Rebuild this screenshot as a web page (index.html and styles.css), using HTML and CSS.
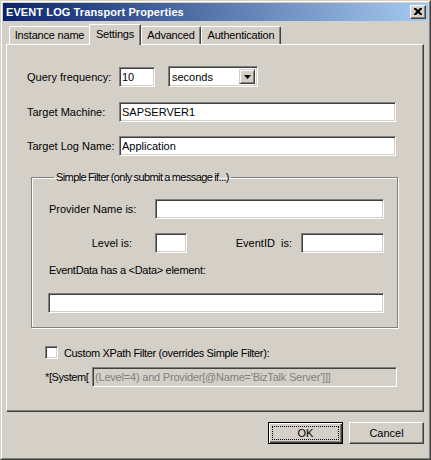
FILE: index.html
```html
<!DOCTYPE html>
<html>
<head>
<meta charset="utf-8">
<link rel="stylesheet" href="styles.css">
</head>
<body>
<div class="window">
  <div class="frame">
    <div class="titlebar">
      <span class="title">EVENT LOG Transport Properties</span>
      <span class="close">
        <svg width="8" height="7" viewBox="0 0 8 7"><path d="M0 0h2l2 2 2-2h2v1l-2.5 2.5L8 6v1H6L4 5 2 7H0V6l2.5-2.5L0 1z" fill="#000"/></svg>
      </span>
    </div>
    <div class="tabs">
      <div class="tab t-instance">Instance name</div>
      <div class="tab t-settings active">Settings</div>
      <div class="tab t-advanced">Advanced</div>
      <div class="tab t-auth">Authentication</div>
    </div>
    <div class="panel">
      <div class="row row-query">
        <span class="lbl lbl-main">Query frequency:</span>
        <input class="field f-query" value="10">
        <span class="combo">
          <span class="combo-text">seconds</span>
          <span class="combo-btn"><svg width="7" height="4" viewBox="0 0 7 4"><path d="M0 0h7L3.5 4z" fill="#000"/></svg></span>
        </span>
      </div>
      <div class="row row-machine">
        <span class="lbl lbl-main">Target Machine:</span>
        <input class="field f-wide" value="SAPSERVER1">
      </div>
      <div class="row row-log">
        <span class="lbl lbl-main">Target Log Name:</span>
        <input class="field f-wide" value="Application">
      </div>
      <fieldset class="group">
        <legend class="legend">Simple Filter (only submit a message if...)</legend>
        <div class="row row-provider">
          <span class="lbl lbl-filter">Provider Name is:</span>
          <input class="field f-provider" value="">
        </div>
        <div class="row row-level">
          <span class="lbl lbl-filter lbl-right">Level is:</span>
          <input class="field f-level" value="">
          <span class="lbl lbl-event">EventID&nbsp; is:</span>
          <input class="field f-event" value="">
        </div>
        <div class="lbl-data">EventData has a &lt;Data&gt; element:</div>
        <input class="field f-data" value="">
      </fieldset>
      <div class="row row-check">
        <span class="checkbox"></span>
        <span class="check-lbl">Custom XPath Filter (overrides Simple Filter):</span>
      </div>
      <div class="row row-xpath">
        <span class="lbl lbl-sys">*[System[</span>
        <input class="field f-xpath" value="(Level=4) and Provider[@Name='BizTalk Server']]]" disabled>
      </div>
    </div>
    <div class="buttons">
      <button class="btn btn-default"><span class="focus">OK</span></button>
      <button class="btn">Cancel</button>
    </div>
  </div>
</div>
</body>
</html>
```

FILE: styles.css
```css
* { box-sizing: border-box; }
html, body { margin: 0; padding: 0; background: #d4d0c8; }
body {
  font-family: "Liberation Sans", Arial, sans-serif;
  font-size: 11px;
  color: #000;
}
.window {
  width: 431px;
  height: 460px;
  border: 1px solid;
  border-color: #d4d0c8 #404040 #404040 #d4d0c8;
  background: #d4d0c8;
}
.frame {
  height: 100%;
  border: 1px solid;
  border-color: #fff #808080 #808080 #fff;
  padding: 1px;
}
.titlebar {
  height: 18px;
  background: linear-gradient(to right, #0a246a, #a6caf0);
  display: flex;
  align-items: center;
  justify-content: space-between;
  padding: 0 2px 0 3px;
}
.title {
  color: #fff;
  font-weight: bold;
  font-size: 11px;
  letter-spacing: 0.1px;
  white-space: nowrap;
}
.close {
  width: 16px;
  height: 14px;
  background: #d4d0c8;
  border: 1px solid;
  border-color: #fff #404040 #404040 #fff;
  box-shadow: inset -1px -1px #808080;
  display: flex;
  align-items: center;
  justify-content: center;
  padding: 0 1px 1px 0;
}
.close svg { display: block; }

.tabs {
  display: flex;
  align-items: flex-end;
  height: 23px;
  padding-left: 6px;
}
.tab {
  height: 18px;
  border-top: 1px solid #fff;
  border-left: 1px solid #fff;
  border-right: 1px solid #404040;
  box-shadow: inset -1px 0 #808080;
  border-radius: 2px 2px 0 0;
  display: flex;
  align-items: center;
  justify-content: center;
  white-space: nowrap;
  padding-bottom: 1px;
  letter-spacing: -0.2px;
}
.t-instance { width: 80px; border-right: none; box-shadow: none; }
.t-settings { width: 52px; }
.t-advanced { width: 60px; }
.t-auth { width: 80px; }
.tab.active {
  height: 21px;
  margin-bottom: -1px;
  background: #d4d0c8;
  position: relative;
  z-index: 1;
  padding-bottom: 3px;
}

.panel {
  margin-left: 3px;
  width: 418px;
  height: 368px;
  border: 1px solid;
  border-color: #fff #404040 #404040 #fff;
  box-shadow: inset -1px -1px #808080;
  display: flex;
  flex-direction: column;
  align-items: flex-start;
}
.row { display: flex; align-items: center; }
.lbl { white-space: nowrap; }
.row-query { margin: 21px 0 0 20px; height: 21px; }
.row-machine { margin: 15px 0 0 20px; height: 20px; }
.row-log { margin: 14px 0 0 20px; height: 20px; }
.lbl-main { width: 92px; }

.field {
  height: 20px;
  border: 1px solid;
  border-color: #808080 #fff #fff #808080;
  box-shadow: inset 1px 1px #404040, inset -1px -1px #d4d0c8;
  background: #fff;
  font-family: "Liberation Sans", Arial, sans-serif;
  font-size: 11px;
  color: #000;
  padding: 0 0 0 2px;
  margin: 0;
  outline: none;
}
.f-query { width: 36px; margin-top: 1px; }
.f-wide { width: 277px; }

.combo {
  margin-left: 13px;
  width: 90px;
  height: 21px;
  border: 1px solid;
  border-color: #808080 #fff #fff #808080;
  box-shadow: inset 1px 1px #404040, inset -1px -1px #d4d0c8;
  background: #fff;
  display: flex;
  align-items: stretch;
  padding: 2px;
}
.combo-text { flex: 1; display: flex; align-items: center; padding-left: 1px; }
.combo-btn {
  width: 16px;
  background: #d4d0c8;
  border: 1px solid;
  border-color: #d4d0c8 #404040 #404040 #d4d0c8;
  box-shadow: inset 1px 1px #fff, inset -1px -1px #808080;
  display: flex;
  align-items: center;
  justify-content: center;
}
.combo-btn svg { display: block; }

.group {
  margin: 15px 0 0 24px;
  width: 367px;
  border: 1px solid #808080;
  box-shadow: inset 1px 1px #fff, 1px 1px #fff;
  padding: 15px 0 14px 16px;
  min-inline-size: 0;
}
.legend {
  padding: 0 2px 0 2px;
  margin-left: 6px;
  line-height: 13px;
  white-space: nowrap;
  letter-spacing: -0.6px;
  word-spacing: -0.5px;
}
.row-provider { height: 20px; }
.row-level { height: 20px; margin-top: 14px; }
.lbl-filter { width: 84px; padding-left: 1px; margin-right: 23px; }
.lbl-right { text-align: right; }
.f-provider { width: 229px; }
.f-level { width: 32px; }
.lbl-event { width: 114px; text-align: right; padding-right: 9px; }
.f-event { width: 83px; }
.lbl-data { margin-top: 11px; line-height: 13px; padding-left: 1px; letter-spacing: -0.3px; }
.f-data { display: block; width: 336px; margin-top: 16px; }

.row-check { margin: 18px 0 0 38px; height: 13px; }
.checkbox {
  width: 13px;
  height: 13px;
  border: 1px solid;
  border-color: #808080 #fff #fff #808080;
  box-shadow: inset 1px 1px #404040, inset -1px -1px #d4d0c8;
  background: #fff;
}
.check-lbl { margin-left: 6px; white-space: nowrap; letter-spacing: -0.35px; }
.row-xpath { margin: 8px 0 0 38px; height: 20px; }
.lbl-sys { width: 47px; letter-spacing: -0.4px; }
.f-xpath {
  width: 305px;
  background: #d4d0c8;
  color: #808080;
  letter-spacing: -0.2px;
}

.buttons {
  display: flex;
  justify-content: flex-end;
  gap: 6px;
  margin-top: 10px;
  padding-right: 4px;
}
.btn {
  width: 75px;
  height: 22px;
  margin: 0;
  background: #d4d0c8;
  border: 1px solid;
  border-color: #fff #404040 #404040 #fff;
  box-shadow: inset -1px -1px #808080;
  font-family: "Liberation Sans", Arial, sans-serif;
  font-size: 11px;
  color: #000;
  padding: 0;
  display: flex;
  align-items: center;
  justify-content: center;
}
.btn-default {
  border: 1px solid #000;
  box-shadow: inset 1px 1px #fff, inset -1px -1px #404040, inset -2px -2px #808080;
  padding: 3px;
}
.focus {
  width: 100%;
  height: 100%;
  border: 1px dotted #000;
  display: flex;
  align-items: center;
  justify-content: center;
}
```
